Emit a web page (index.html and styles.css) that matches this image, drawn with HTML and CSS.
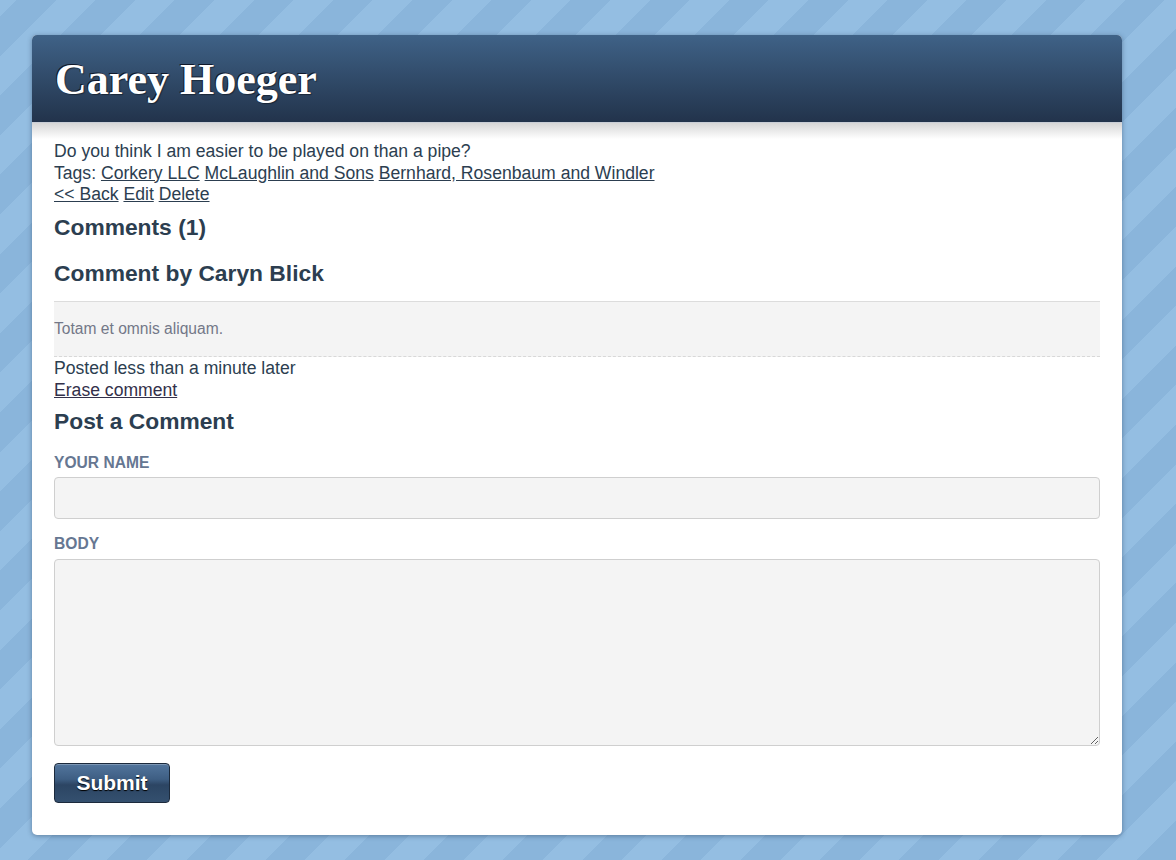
FILE: index.html
```html
<!DOCTYPE html>
<html>
<head>
<meta charset="utf-8">
<title>Carey Hoeger</title>
<link rel="stylesheet" href="styles.css">
</head>
<body>
<div class="page">
  <div class="card">
    <div class="header">
      <h1 class="title">Carey Hoeger</h1>
    </div>
    <div class="content">
      <p class="line">Do you think I am easier to be played on than a pipe?</p>
      <p class="line">Tags: <a href="#">Corkery LLC</a> <a href="#">McLaughlin and Sons</a> <a href="#">Bernhard, Rosenbaum and Windler</a></p>
      <p class="line"><a href="#">&lt;&lt; Back</a> <a href="#">Edit</a> <a href="#">Delete</a></p>
      <h3 class="heading">Comments (1)</h3>
      <div class="comment">
        <h3 class="heading comment-title">Comment by Caryn Blick</h3>
        <div class="comment-body">Totam et omnis aliquam.</div>
        <p class="line meta">Posted less than a minute later</p>
        <p class="line meta"><a href="#" class="erase">Erase comment</a></p>
      </div>
      <h3 class="heading post-title">Post a Comment</h3>
      <form class="form">
        <label class="label">Your name</label>
        <input class="input" type="text">
        <label class="label label-body">Body</label>
        <textarea class="textarea"></textarea>
        <div class="actions"><button type="button" class="submit">Submit</button></div>
      </form>
    </div>
  </div>
</div>
</body>
</html>
```

FILE: styles.css
```css
html, body {
  margin: 0;
  padding: 0;
  height: 100%;
}
body {
  background-color: #8ab6dc;
  background-image: repeating-linear-gradient(-45deg, #8ab5db 0, #8ab5db 28px, #94bee2 28px, #94bee2 56px);
  font-family: "Liberation Sans", Arial, sans-serif;
  font-size: 17.6px;
  color: #2c3e50;
}
.page {
  padding: 35px 0 0 32px;
}
.card {
  width: 1090px;
  height: 800px;
  background: #fff;
  border-radius: 5px;
  box-shadow: 0 1px 5px rgba(30, 50, 80, 0.45);
  overflow: hidden;
}
.header {
  height: 88px;
  background: linear-gradient(to bottom, #3f6287 0%, #22334b 100%);
  padding: 0 23px;
  display: flex;
  align-items: center;
  position: relative;
  z-index: 1;
  border-bottom: 1px solid #c9ced6;
  box-sizing: border-box;
}
.title {
  margin: 0;
  font-family: "Liberation Serif", "Times New Roman", serif;
  font-weight: bold;
  font-size: 44px;
  color: #fff;
  text-shadow: -1px -1px 0 #10182a, 1px 1px 1px rgba(0, 0, 0, 0.4);
  line-height: 1;
  padding-top: 2px;
}
.content {
  padding: 18px 22px 0 22px;
  background: linear-gradient(to bottom, #d6d6d6 0px, #fff 16px, #fff 100%);
}
.line {
  margin: 0;
  line-height: 21.5px;
}
.meta {
  line-height: 22px;
}
a {
  color: #2c3e50;
  text-decoration: underline;
}
a.erase {
  color: #33304a;
}
.heading {
  font-size: 22.8px;
  font-weight: bold;
  margin: 8px 0 9px;
  line-height: 26px;
  color: #2c3e50;
}
.comment-title {
  margin: 20px 0 15px;
}
.post-title {
  margin-top: 7px;
}
.comment-body {
  background: #f4f4f4;
  border-top: 1px solid #dcdcdc;
  border-bottom: 1px dashed #d8d8d8;
  padding: 18px 0;
  line-height: 18px;
  font-size: 15.6px;
  color: #737888;
}
.form {
  display: flex;
  flex-direction: column;
}
.label {
  font-size: 15.6px;
  font-weight: bold;
  text-transform: uppercase;
  color: #667792;
  line-height: 18px;
  margin-top: 11px;
  margin-bottom: 5px;
}
.input {
  height: 42px;
  box-sizing: border-box;
  border: 1px solid #cfcfcf;
  border-radius: 4px;
  background: #f4f4f4;
  width: 100%;
  margin: 0;
  font-size: 16px;
}
.label-body {
  margin-top: 16px;
  margin-bottom: 6px;
}
.textarea {
  height: 187px;
  box-sizing: border-box;
  border: 1px solid #cfcfcf;
  border-radius: 4px;
  background: #f4f4f4;
  width: 100%;
  margin: 0;
  resize: vertical;
}
.actions {
  margin-top: 17px;
}
.submit {
  width: 116px;
  height: 40px;
  border: 1px solid #1c2a3c;
  border-radius: 4px;
  background: linear-gradient(to bottom, #52759d 0%, #3e5e83 40%, #2c4563 55%, #34506f 100%);
  color: #fff;
  font-family: "Liberation Sans", Arial, sans-serif;
  font-weight: bold;
  font-size: 21px;
  text-shadow: 0 1px 1px #000;
  box-shadow: inset 0 1px 0 rgba(255, 255, 255, 0.25);
  padding: 0;
  cursor: pointer;
}
```
